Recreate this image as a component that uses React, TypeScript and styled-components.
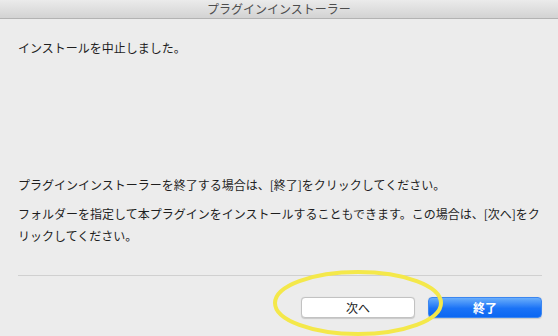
import React from 'react'
import styled, { createGlobalStyle } from 'styled-components'

const GlobalStyle = createGlobalStyle`
  html, body {
    margin: 0;
    padding: 0;
    background: #ececec;
  }
  body {
    font-family: 'Noto Sans CJK JP', 'Noto Sans', sans-serif;
    -webkit-font-smoothing: antialiased;
  }
`

const StyledWindow = styled.div`
  position: relative;
  width: 558px;
  height: 336px;
  display: flex;
  flex-direction: column;
  background: #ececec;
  overflow: hidden;
`

const TitleBar = styled.div`
  height: 18px;
  flex-shrink: 0;
  display: flex;
  align-items: center;
  justify-content: center;
  background: linear-gradient(#ebebeb, #d3d3d3);
  border-bottom: 1px solid #b3b3b3;
  color: #4d4d4d;
  font-size: 12px;
  line-height: 18px;
`

const Body = styled.div`
  flex-grow: 1;
  display: flex;
  flex-direction: column;
  padding: 0 16px 18px 18px;
`

const Message = styled.p<{ $top: number }>`
  margin: ${props => props.$top}px 0 0;
  font-size: 12px;
  line-height: 22px;
  color: #1e1e1e;
`

const Filler = styled.div`
  flex-grow: 1;
`

const Separator = styled.div`
  height: 1px;
  margin-top: 28px;
  background: #d0d0d0;
`

const ButtonRow = styled.div`
  display: flex;
  justify-content: flex-end;
  gap: 13px;
  margin-top: 21px;
`

const Button = styled.button<{ $primary?: boolean }>`
  width: 114px;
  height: 21px;
  padding: 0;
  border-radius: 4px;
  font-family: inherit;
  font-size: 12px;
  line-height: 19px;
  cursor: default;
  border: 1px solid ${props => (props.$primary ? '#3b86f0' : '#c2c2c2')};
  background: ${props =>
    props.$primary ? 'linear-gradient(#6aaefb, #1a72f6 55%, #0b67f2)' : '#ffffff'};
  color: ${props => (props.$primary ? '#ffffff' : '#222222')};
  font-weight: ${props => (props.$primary ? 700 : 400)};
  box-shadow: 0 0.5px 1px rgba(0, 0, 0, 0.15);
`

const Highlight = styled.svg`
  position: absolute;
  left: 272px;
  top: 268px;
  pointer-events: none;
`

const App: React.FC = () => {
  return (
    <StyledWindow>
      <GlobalStyle />
      <TitleBar>プラグインインストーラー</TitleBar>
      <Body>
        <Message $top={18}>インストールを中止しました。</Message>
        <Filler />
        <Message $top={0}>
          プラグインインストーラーを終了する場合は、[終了]をクリックしてください。
        </Message>
        <Message $top={7}>
          フォルダーを指定して本プラグインをインストールすることもできます。この場合は、[次へ]をクリックしてください。
        </Message>
        <Separator />
        <ButtonRow>
          <Button>次へ</Button>
          <Button $primary>終了</Button>
        </ButtonRow>
      </Body>
      <Highlight width="174" height="70" viewBox="0 0 174 70">
        <ellipse cx="86" cy="35" rx="83" ry="31" fill="none" stroke="#f4e84a" strokeWidth="4" />
      </Highlight>
    </StyledWindow>
  )
}

export default App
